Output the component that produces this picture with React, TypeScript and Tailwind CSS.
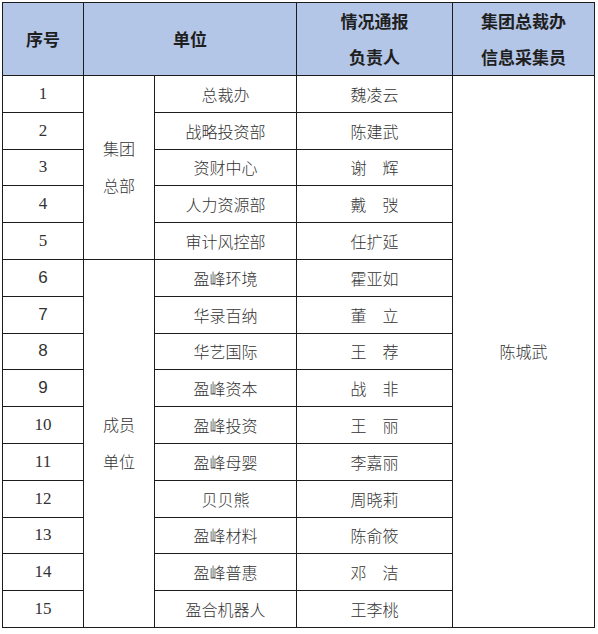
const rows = [
  { no: "1", unit: "总裁办", owner: "魏凌云" },
  { no: "2", unit: "战略投资部", owner: "陈建武" },
  { no: "3", unit: "资财中心", owner: "谢\u3000辉" },
  { no: "4", unit: "人力资源部", owner: "戴\u3000弢" },
  { no: "5", unit: "审计风控部", owner: "任扩延" },
  { no: "6", unit: "盈峰环境", owner: "霍亚如" },
  { no: "7", unit: "华录百纳", owner: "董\u3000立" },
  { no: "8", unit: "华艺国际", owner: "王\u3000荐" },
  { no: "9", unit: "盈峰资本", owner: "战\u3000非" },
  { no: "10", unit: "盈峰投资", owner: "王\u3000丽" },
  { no: "11", unit: "盈峰母婴", owner: "李嘉丽" },
  { no: "12", unit: "贝贝熊", owner: "周晓莉" },
  { no: "13", unit: "盈峰材料", owner: "陈俞筱" },
  { no: "14", unit: "盈峰普惠", owner: "邓\u3000洁" },
  { no: "15", unit: "盈合机器人", owner: "王李桃" },
];

const sansDigits = ["6", "7", "8", "9"];

const cell = "border border-[#1c1c1c] text-center align-middle p-0";

export default function App() {
  return (
    <div className="w-[598px] h-[634px] bg-white pl-[2px] pt-[2px] font-['Noto_Sans_CJK_SC',sans-serif]">
      <table className="border-collapse table-fixed w-[592px] text-[16px] leading-[22px] font-light text-[#333]">
        <colgroup>
          <col className="w-[81px]" />
          <col className="w-[71px]" />
          <col className="w-[142px]" />
          <col className="w-[156px]" />
          <col className="w-[142px]" />
        </colgroup>
        <thead>
          <tr className="h-[73px] bg-[#b4c6e7] text-[#1f1f1f] font-bold text-[17px]">
            <th className={cell}>序号</th>
            <th className={cell} colSpan={2}>单位</th>
            <th className={`${cell} leading-[36px]`}>
              情况通报
              <br />
              负责人
            </th>
            <th className={`${cell} leading-[36px]`}>
              集团总裁办
              <br />
              信息采集员
            </th>
          </tr>
        </thead>
        <tbody>
          {rows.map((r, i) => (
            <tr key={r.no} className="h-[36.8px]">
              <td
                className={`${cell} ${
                  sansDigits.includes(r.no)
                    ? "font-['Liberation_Sans',sans-serif]"
                    : "font-['Liberation_Serif',serif]"
                } font-normal text-[17px]`}
              >
                {r.no}
              </td>
              {i === 0 && (
                <td className={`${cell} leading-[37px]`} rowSpan={5}>
                  集团
                  <br />
                  总部
                </td>
              )}
              {i === 5 && (
                <td className={`${cell} leading-[37px]`} rowSpan={10}>
                  成员
                  <br />
                  单位
                </td>
              )}
              <td className={cell}>{r.unit}</td>
              <td className={cell}>{r.owner}</td>
              {i === 0 && (
                <td className={cell} rowSpan={15}>
                  陈城武
                </td>
              )}
            </tr>
          ))}
        </tbody>
      </table>
    </div>
  );
}
